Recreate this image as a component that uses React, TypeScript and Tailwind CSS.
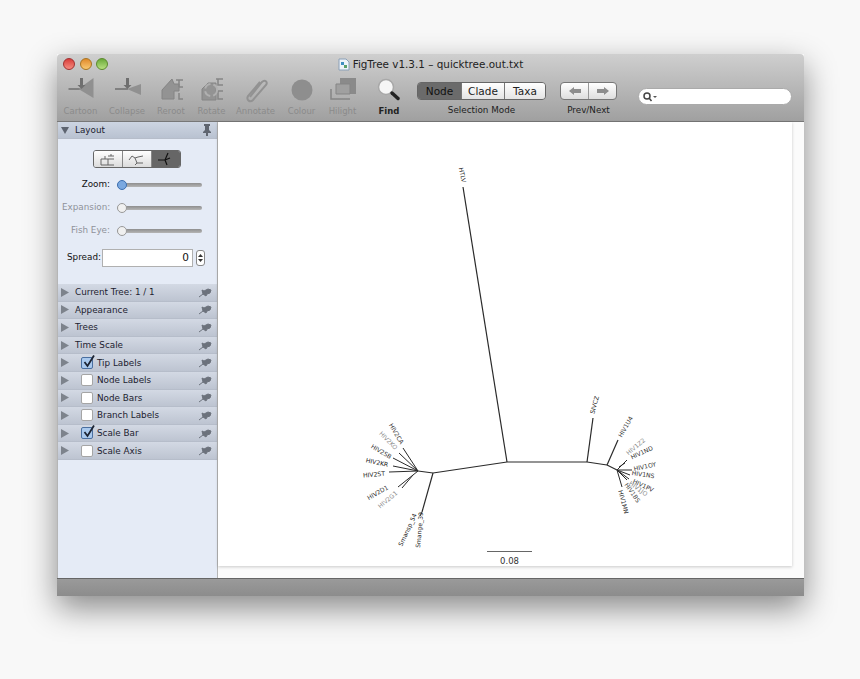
import type { ReactNode } from "react";

const sans = "font-['DejaVu_Sans',Verdana,sans-serif]";

function Chevron({ open }: { open?: boolean }) {
  return (
    <svg width="8" height="9" viewBox="0 0 8 9" className="shrink-0">
      {open ? <path d="M0 1h8L4 8z" fill="#5d6470" /> : <path d="M0 0l8 4.5L0 9z" fill="#7d838c" />}
    </svg>
  );
}

function PinIcon() {
  return (
    <svg width="15" height="11" viewBox="0 0 15 11" className="shrink-0">
      <path d="M1 10l4-3M4 3l2 1 4-2 3 1-1 3-3 1-1 2-3-2z" fill="#6c727c" stroke="#6c727c" strokeWidth="1" />
    </svg>
  );
}

function ToolButton({ label, children, dark, w }: { label: string; children: ReactNode; dark?: boolean; w: string }) {
  return (
    <div className={`flex flex-col items-center ${w}`}>
      <svg width="36" height="30" viewBox="0 0 36 30">
        {children}
      </svg>
      <span className={`whitespace-nowrap text-[8.5px] leading-[11px] ${dark ? "font-bold text-[#222]" : "text-[#8b8b8b]"}`}>{label}</span>
    </div>
  );
}

function Segment({ items, active }: { items: string[]; active: string }) {
  return (
    <div className="flex h-[18px] overflow-hidden rounded-[4px] border border-[#666]">
      {items.map((t, i) => (
        <div
          key={t}
          className={`flex items-center justify-center pt-[1px] text-[10.5px] ${i > 0 ? "border-l border-[#777]" : ""} ${t === "Taxa" ? "w-[41px]" : "w-[43px]"} ${
            t === active ? "bg-[#6b6b6b] text-[#111]" : "bg-gradient-to-b from-white to-[#e4e4e4] text-[#222]"
          }`}
        >
          {t}
        </div>
      ))}
    </div>
  );
}

function Slider({ label, on }: { label: string; on?: boolean }) {
  return (
    <div className="flex h-[12px] items-center">
      <span className={`w-[48px] whitespace-nowrap text-right text-[8.8px] ${on ? "text-[#111]" : "text-[#8f929a]"}`}>{label}</span>
      <div className="relative ml-[7px] h-[4px] w-[85px] rounded-full bg-gradient-to-b from-[#8e8e8e] to-[#b5b5b5]">
        <div
          className={`absolute left-0 top-[-3px] h-[10px] w-[10px] rounded-full border ${
            on ? "border-[#3d6fb0] bg-[#7aa8e0]" : "border-[#999] bg-[#f0f0f0]"
          }`}
        />
      </div>
    </div>
  );
}

function Row({ label, check }: { label: string; check?: "on" | "off" }) {
  return (
    <div className="flex h-[17.6px] items-center border-b border-[#b6bdca] bg-gradient-to-b from-[#d3d9e4] to-[#bdc4d1] pl-[3px] pr-[4px]">
      <Chevron />
      {check ? (
        <div
          className={`relative ml-[12px] h-[12px] w-[12px] rounded-[2px] border ${
            check === "on" ? "border-[#4a6fa0] bg-[#a9c9ee]" : "border-[#a5a5a5] bg-white"
          }`}
        >
          {check === "on" && (
            <svg width="14" height="14" viewBox="0 0 14 14" className="absolute -top-[4px] left-0">
              <path d="M2.5 8l3 4L12 1.5" fill="none" stroke="#1c2433" strokeWidth="1.8" />
            </svg>
          )}
        </div>
      ) : null}
      <span className={`${check ? "ml-[4px]" : "ml-[6px]"} flex-1 whitespace-nowrap pt-[1px] text-[8.8px] text-[#1d2230]`}>{label}</span>
      <PinIcon />
    </div>
  );
}

const labels: [string, number, number, number, string][] = [
  ["HTLV", 462, 175, 78, "#222"],
  ["SIVCZ", 595, 405, -75, "#222"],
  ["HIV1U4", 626, 427, -60, "#333"],
  ["HIV1Z2", 636, 447, -40, "#8a8a8a"],
  ["HIV1ND", 642, 453, -25, "#333"],
  ["HIV1OY", 645, 467, -12, "#333"],
  ["HIV1NS", 643, 475, 8, "#333"],
  ["HIV1PV", 643, 486, 25, "#333"],
  ["HIV1JO", 638, 489, 35, "#8a8a8a"],
  ["HIV1BS", 632, 493, 55, "#444"],
  ["HIV1MN", 623, 502, 75, "#222"],
  ["HIV2CA", 396, 434, 60, "#333"],
  ["HIV2KO", 388, 441, 45, "#8a8a8a"],
  ["HIV2SB", 381, 452, 30, "#333"],
  ["HIV2KR", 377, 463, 12, "#222"],
  ["HIV2ST", 374, 475, -5, "#222"],
  ["HIV2D1", 378, 493, -30, "#333"],
  ["HIV2G1", 388, 500, -40, "#8a8a8a"],
  ["Smansp_54", 408, 530, -65, "#222"],
  ["Smange_39", 420, 530, -85, "#222"],
];

const branches = [
  "M463 187L507 462",
  "M507 462L587 462",
  "M507 462L433 473",
  "M433 473L418 471",
  "M433 473L422 512",
  "M587 462L593 418",
  "M587 462L607 465",
  "M607 465L618 440",
  "M607 465L617 470",
];

const tips = [
  "M617 470L627 460M619 467L625 463",
  "M617 470L632 470M617 470L630 475M617 470L629 479M617 470L627 480M617 470L622 487",
  "M418 471L403 448M418 471L399 453M418 471L393 458M418 471L393 466M418 471L389 472",
  "M413 475L398 487M413 475L402 488M418 471L413 475",
  "M422 512L420 516",
];

export default function App() {
  return (
    <div className={`h-[679px] w-[860px] overflow-hidden bg-[#f8f8f8] pl-[57px] pt-[54px] ${sans}`}>
      <div className="flex h-[542px] w-[747px] flex-col shadow-[0_12px_30px_rgba(0,0,0,0.45)]">
        <div className="h-[68px] rounded-t-[4px] border-b border-[#777] bg-gradient-to-b from-[#cfcfcf] to-[#a0a0a0] pt-[3px]">
          <div className="relative flex h-[15px] items-center justify-center text-[10.4px] text-[#222]">
            <div className="absolute left-[6px] top-[1px] flex gap-[4.5px]">
              <div className="h-[12px] w-[12px] rounded-full border border-[#a03030] bg-gradient-to-b from-[#d83a3a] to-[#f48a80]" />
              <div className="h-[12px] w-[12px] rounded-full border border-[#a87420] bg-gradient-to-b from-[#e08a28] to-[#f8c870]" />
              <div className="h-[12px] w-[12px] rounded-full border border-[#5c8a2c] bg-gradient-to-b from-[#6aaa38] to-[#b8e080]" />
            </div>
            <svg width="12" height="13" viewBox="0 0 12 13" className="mr-[3px]">
              <path d="M1 1h7l3 3v8H1z" fill="#eef3f8" stroke="#8aa0b8" />
              <path d="M3 4h3v3H3z" fill="#3f8fc0" />
              <path d="M6 7h3v3H6z" fill="#5aa06a" />
            </svg>
            FigTree v1.3.1 – quicktree.out.txt
          </div>
          <div className="mt-[4px] flex items-start">
            <ToolButton label="Cartoon" w="w-[47px]">
              <path d="M5.5 12h12v2h-12z" fill="#808080" />
              <path d="M15.5 13L30.5 2v20z" fill="#909090" />
              <path d="M17 2h3v7h2.5l-4 4-4-4H17z" fill="#6f6f6f" />
            </ToolButton>
            <ToolButton label="Collapse" w="w-[46px]">
              <path d="M6 12h13v2H6z" fill="#808080" />
              <path d="M18 13l14-5v11z" fill="#909090" />
              <path d="M17 2h3v7h2.5l-4 4-4-4H17z" fill="#6f6f6f" />
            </ToolButton>
            <ToolButton label="Reroot" w="w-[42px]">
              <path d="M9 14l10-11 2 5h5v7h-5v8H9z" fill="#939393" stroke="#848484" />
              <path d="M23 4h7M26 4v7M26 11h4M26 17v6h4" fill="none" stroke="#858585" strokeWidth="1.5" />
            </ToolButton>
            <ToolButton label="Rotate" w="w-[39px]">
              <path d="M22 3h7M24 3v6h5M24 15h5M24 15v8h5" fill="none" stroke="#858585" strokeWidth="1.5" />
              <path d="M8 13l6-6h8v17H8z" fill="#939393" stroke="#848484" />
              <circle cx="17" cy="14" r="6" fill="none" stroke="#b0b0b0" strokeWidth="2" strokeDasharray="7 3" />
            </ToolButton>
            <ToolButton label="Annotate" w="w-[49px]">
              <path d="M12 21L24 6c3-3 6 0 4 3L15 24c-3 3-7 0-5-4L22 6" fill="none" stroke="#929292" strokeWidth="2" />
            </ToolButton>
            <ToolButton label="Colour" w="w-[43px]">
              <circle cx="18" cy="14" r="10.5" fill="#8e8e8e" />
            </ToolButton>
            <ToolButton label="Hilight" w="w-[39px]">
              <path d="M15 2h16v16H15z" fill="#8a8a8a" />
              <path d="M11 8h14v10H11z" fill="#a0a0a0" stroke="#858585" />
              <path d="M6 13v10h5M11 23h14" fill="none" stroke="#858585" strokeWidth="1.5" />
            </ToolButton>
            <ToolButton label="Find" dark w="w-[54px]">
              <circle cx="15" cy="11" r="7.5" fill="#f6f6f6" stroke="#a8a8a8" strokeWidth="1.5" />
              <path d="M21 17l6 5.5" stroke="#222" strokeWidth="3.5" strokeLinecap="round" />
            </ToolButton>
            <div className="ml-[1px] flex flex-col items-center pt-[6px]">
              <Segment items={["Node", "Clade", "Taxa"]} active="Node" />
              <span className="mt-[5px] text-[8.8px] leading-[11px] text-[#222]">Selection Mode</span>
            </div>
            <div className="ml-[14px] flex flex-col items-center pt-[6px]">
              <div className="flex h-[18px] w-[57px] overflow-hidden rounded-[4px] border border-[#777] bg-gradient-to-b from-white to-[#dedede]">
                <div className="flex flex-1 items-center justify-center border-r border-[#999]">
                  <svg width="12" height="10" viewBox="0 0 12 10">
                    <path d="M0 5l5-4v2h7v4H5v2z" fill="#8d8d8d" />
                  </svg>
                </div>
                <div className="flex flex-1 items-center justify-center">
                  <svg width="12" height="10" viewBox="0 0 12 10">
                    <path d="M12 5L7 1v2H0v4h7v2z" fill="#8d8d8d" />
                  </svg>
                </div>
              </div>
              <span className="mt-[5px] text-[8.8px] leading-[11px] text-[#222]">Prev/Next</span>
            </div>
            <div className="ml-[21px] mt-[12px] flex h-[17px] w-[154px] items-center rounded-full border border-[#aaa] bg-white pl-[4px]">
              <svg width="14" height="10" viewBox="0 0 14 10">
                <circle cx="4" cy="4" r="3" fill="none" stroke="#444" strokeWidth="1.5" />
                <path d="M6 6l2.5 3" stroke="#444" strokeWidth="1.5" />
                <path d="M10 4h4l-2 2z" fill="#555" />
              </svg>
            </div>
          </div>
        </div>

        <div className="flex min-h-0 flex-1">
          <div className="flex w-[161px] flex-col border-x border-[#b5b5b5] bg-[#e5ebf6]">
            <div className="flex h-[17px] items-center border-b border-[#b6bdca] bg-gradient-to-b from-[#cdd5e2] to-[#b9c2d1] pl-[3px] pr-[6px]">
              <Chevron open />
              <span className="ml-[6px] flex-1 pt-[1px] text-[8.8px] text-[#1d2230]">Layout</span>
              <svg width="8" height="12" viewBox="0 0 8 12">
                <path d="M1 0h6v2H6v4l2 2v1H5v3H3V9H0V8l2-2V2H1z" fill="#5f6570" />
              </svg>
            </div>
            <div className="flex h-[145px] flex-col items-center pt-[11px]">
              <div className="-ml-[2px] flex h-[18px] w-[88px] overflow-hidden rounded-[3px] border border-[#666]">
                <div className="flex flex-1 items-center justify-center border-r border-[#888] bg-gradient-to-b from-white to-[#dcdcdc]">
                  <svg width="16" height="13" viewBox="0 0 16 13">
                    <path d="M1 12V6h7v6zM8 3h6M8 6h6M8 12h6M11 1v2M5 3v3" fill="none" stroke="#666" />
                  </svg>
                </div>
                <div className="flex flex-1 items-center justify-center border-r border-[#888] bg-gradient-to-b from-white to-[#dcdcdc]">
                  <svg width="18" height="13" viewBox="0 0 18 13">
                    <path d="M1 7l3-4 3 2 3-1 5-1M7 5l2 5-2 2M9 10h6" fill="none" stroke="#666" />
                  </svg>
                </div>
                <div className="flex flex-1 items-center justify-center bg-[#666]">
                  <svg width="18" height="14" viewBox="0 0 18 14">
                    <path d="M1 8h7l3-7M8 8l2 5M8 8l5-2" fill="none" stroke="#111" strokeWidth="1.2" />
                  </svg>
                </div>
              </div>
              <div className="mt-[11px] flex flex-col gap-[11px] self-start pl-[4px]">
                <Slider label="Zoom:" on />
                <Slider label="Expansion:" />
                <Slider label="Fish Eye:" />
              </div>
              <div className="mt-[12px] flex items-center self-start pl-[9px]">
                <span className="w-[33px] whitespace-nowrap text-[8.8px] text-[#111]">Spread:</span>
                <div className="ml-[2px] flex h-[18px] w-[91px] items-center justify-end border border-[#b0b0b0] bg-white pr-[3px] text-[10.5px] text-[#111]">
                  0
                </div>
                <div className="ml-[3px] flex h-[16px] w-[9px] flex-col items-center justify-center gap-[2px] rounded-[3px] border border-[#888] bg-white">
                  <svg width="5" height="3" viewBox="0 0 5 3">
                    <path d="M2.5 0L5 3H0z" fill="#333" />
                  </svg>
                  <svg width="5" height="3" viewBox="0 0 5 3">
                    <path d="M2.5 3L5 0H0z" fill="#333" />
                  </svg>
                </div>
              </div>
            </div>
            <Row label="Current Tree: 1 / 1" />
            <Row label="Appearance" />
            <Row label="Trees" />
            <Row label="Time Scale" />
            <Row label="Tip Labels" check="on" />
            <Row label="Node Labels" check="off" />
            <Row label="Node Bars" check="off" />
            <Row label="Branch Labels" check="off" />
            <Row label="Scale Bar" check="on" />
            <Row label="Scale Axis" check="off" />
          </div>

          <div className="min-w-0 flex-1 bg-[#fbfbfb] pb-[12px] pr-[12px]">
            <svg width="574" height="444" viewBox="218 122 574 444" className="block bg-white shadow-[0_1px_3px_rgba(0,0,0,0.2)]">
              {branches.map((d, i) => (
                <path key={i} d={d} fill="none" stroke="#2a2a2a" strokeWidth="1.2" />
              ))}
              {tips.map((d, i) => (
                <path key={i} d={d} fill="none" stroke="#2a2a2a" strokeWidth="1" />
              ))}
              {labels.map(([t, x, y, r, c]) => (
                <text
                  key={t}
                  x={x}
                  y={y}
                  transform={`rotate(${r} ${x} ${y})`}
                  fontSize="6.1"
                  fill={c}
                  textAnchor="middle"
                  dominantBaseline="middle"
                >
                  {t}
                </text>
              ))}
              <path d="M487 551.5h45" stroke="#666" strokeWidth="1" />
              <text x="509.5" y="564" fontSize="8.5" fill="#333" textAnchor="middle">
                0.08
              </text>
            </svg>
          </div>
        </div>

        <div className="h-[18px] border-t border-[#666] bg-gradient-to-b from-[#9a9a9a] to-[#8c8c8c]" />
      </div>
    </div>
  );
}
